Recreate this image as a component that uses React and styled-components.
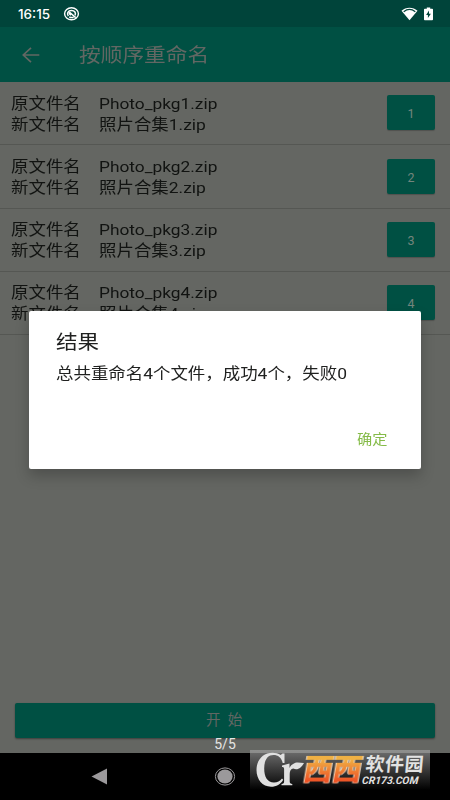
import React from "react";
import styled, { createGlobalStyle } from "styled-components";

const files = [1, 2, 3, 4];

const App = () => {
  return (
    <Screen>
      <GlobalStyle />
      <StatusBar>
        <Clock>16:15</Clock>
        <SyncIcon />
        <Spacer />
        <WifiIcon />
        <BatteryIcon />
      </StatusBar>
      <Header>
        <BackIcon />
        <Title>
          <Text size={19.3}>按顺序重命名</Text>
        </Title>
      </Header>

      <List>
        {files.map((n) => (
          <Row key={n}>
            <Labels>
              <Line><Text size={15.5}>原文件名</Text></Line>
              <Line><Text size={15.5}>新文件名</Text></Line>
            </Labels>
            <Names>
              <Line><Text size={15.4}>{`Photo_pkg${n}.zip`}</Text></Line>
              <Line><Text size={15.5}>{`照片合集${n}.zip`}</Text></Line>
            </Names>
            <Order>{n}</Order>
          </Row>
        ))}
      </List>

      <Footer>
        <Start>开 始</Start>
        <Count>5/5</Count>
      </Footer>

      <NavBar>
        <NavIcons />
      </NavBar>

      <Dialog>
        <DialogTitle><Text size={19.2}>结果</Text></DialogTitle>
        <Message><Text size={15.5}>总共重命名4个文件，成功4个，失败0</Text></Message>
        <Confirm><Text size={13.5}>确定</Text></Confirm>
      </Dialog>

      <Watermark>
        <Swirl />
        <Brand>西西</Brand>
        <Site>
          <SiteName>软件园</SiteName>
          <SiteUrl>CR173.COM</SiteUrl>
        </Site>
      </Watermark>
    </Screen>
  );
};

const SyncIcon = () => (
  <svg width="17" height="16" viewBox="0 0 17 16" fill="none">
    <ellipse cx="8.5" cy="7.7" rx="6.9" ry="6" stroke="#fff" strokeWidth="1.4" />
    <path d="M5.3 10.2C3.5 7.5 5 4.4 8.5 4.4c3.3 0 4.7 2.6 3.5 5" stroke="#fff" strokeWidth="1.5" />
    <path d="M6.3 6l6.4 5.6M6.3 10.8c1.2.8 3 .9 4.300.3M6.4 6.2v1.6l1.6 1.3" stroke="#fff" strokeWidth="1.5" />
  </svg>
);

const WifiIcon = () => (
  <svg width="17" height="14" viewBox="0 0 17 14">
    <path d="M.5 3.8C5-.4 12-.4 16.5 3.8L8.5 13.2z" fill="#fff" />
    <path d="M2.7 4.8C6.2 2 10.8 2 14.3 4.8" stroke="#00443a" strokeWidth="1.2" fill="none" />
  </svg>
);

const BatteryIcon = () => (
  <svg width="15" height="14" viewBox="-6 0 15 14">
    <path d="M2.8.4h3.4v1.3H8.2c.4 0 .8.3.8.7v10c0 .4-.4.8-.8.8H.8c-.5 0-.8-.4-.8-.8v-10c0-.4.3-.7.8-.7h2z" fill="#fff" />
    <path d="M5 3.5L2.1 8h1.8v3L6.9 6.7H5z" fill="#00443a" />
  </svg>
);

const BackIcon = () => (
  <svg width="18" height="16" viewBox="0 0 18 16" fill="none" stroke="#626763" strokeWidth="1.7">
    <path d="M17.3 8H1.5M9 .9L1.3 8 9 15.1" />
  </svg>
);

const NavIcons = () => (
  <svg width="450" height="47" viewBox="0 0 450 47">
    <path d="M91.5 23.4L107 15.5v16z" fill="#9b999b" />
    <ellipse cx="225" cy="23.5" rx="9.6" ry="8.6" fill="none" stroke="#9b999b" strokeWidth="1" />
    <ellipse cx="225" cy="23.5" rx="7.6" ry="6.9" fill="#9b999b" />
  </svg>
);

const Swirl = () => (
  <svg width="54" height="38" viewBox="0 0 54 38" fill="#e0e0e0">
    <path d="M34.500 3.500v9.500h-1.800C31.500 7.500 28 5 23.500 5c-6 0-9.300 5-9.300 13.500S17.500 32.500 24 32.500c3.300 0 6-1.500 8-4l1.200 1.200C30.500 34.500 26.500 36.700 21 36.700 12.500 36.700 6.500 29.500 6.500 20 6.500 10 13 2.700 22.500 2.700c3.200 0 5.700.8 8.200 2.300l1.800-1.500z" />
    <path d="M32 15.500l7.500-2v4.500c1-2.200 2.300-3.500 4-4.200C46 11.500 50 12.800 54 13c-2.500 4.500-6.200 7.700-10.700 5.600-2.500.4-3.600 2.600-3.600 5.400v7.500c0 1.600.8 2.200 2.600 2.500v1.200H31.500V34c2-.3 2.600-1 2.600-2.500V19c0-1.600-.6-2-2.100-2z" />
  </svg>
);

const GlobalStyle = createGlobalStyle`
  body {
    margin: 0;
    background: #000;
  }
  * {
    box-sizing: border-box;
  }
`;

const Screen = styled.div`
  position: relative;
  display: flex;
  flex-direction: column;
  width: 450px;
  height: 800px;
  overflow: hidden;
  background: #646662;
  color: #111311;
  font-family: Roboto, "Noto Sans CJK SC", sans-serif;
`;

// glyphs are a bit wider than tall on this screen
const Text = styled.span`
  display: inline-block;
  font-size: ${(props) => props.size}px;
  white-space: nowrap;
  transform: scaleX(1.125);
  transform-origin: left center;
`;

const StatusBar = styled.div`
  display: flex;
  align-items: center;
  height: 27px;
  padding: 0 17px 0 18px;
  background: #00443a;
`;

const Clock = styled.div`
  width: 45px;
  color: #fff;
  font: 500 13.5px/27px Inter, sans-serif;
  padding-top: 1px;
`;

const Spacer = styled.div`
  flex: 1;
`;

const Header = styled.div`
  display: flex;
  align-items: center;
  height: 55px;
  padding-left: 22px;
  background: #005043;
`;

const Title = styled.div`
  padding-top: 4px;
  margin-left: 39px;
  color: #626763;
  line-height: 54px;
`;

const List = styled.div`
  flex: 1;
`;

const Row = styled.div`
  display: flex;
  height: 63.3px;
  padding: 10.5px 15px 0 11px;
  border-bottom: 1px solid #555753;
`;

const Labels = styled.div`
  width: 87.5px;
`;

const Names = styled.div`
  flex: 1;
`;

const Line = styled.div`
  height: 21px;
  line-height: 21px;
`;

const Order = styled.div`
  width: 48px;
  height: 35px;
  margin-top: 2.8px;
  border-radius: 2px;
  background: #005043;
  box-shadow: 0 1px 1px rgba(0, 0, 0, 0.2);
  color: #74857d;
  font-size: 12.5px;
  line-height: 37px;
  text-align: center;
`;

const Footer = styled.div`
  height: 50px;
  padding: 0 15px;
`;

const Start = styled.div`
  height: 35px;
  border-radius: 2px;
  background: #005043;
  box-shadow: 0 1px 2px rgba(0, 0, 0, 0.4);
  color: #626763;
  font-size: 14.5px;
  line-height: 36px;
  letter-spacing: 1.8px;
  text-align: center;
`;

const Count = styled.div`
  color: #e4e5e4;
  font-size: 14px;
  line-height: 12px;
  text-align: center;
`;

const NavBar = styled.div`
  height: 47px;
  background: #000;
`;

const Dialog = styled.div`
  position: absolute;
  left: 29px;
  top: 311px;
  width: 392px;
  height: 158px;
  padding: 18px 26.5px;
  border-radius: 2px;
  background: #fff;
  box-shadow: 0 7px 14px rgba(0, 0, 0, 0.22);
  color: #202120;
`;

const DialogTitle = styled.div`
  height: 28px;
  line-height: 28px;
`;

const Message = styled.div`
  height: 34px;
  line-height: 34px;
`;

const Confirm = styled.div`
  height: 30px;
  margin: 33px 0 0 301.5px;
  color: #85bb48;
  line-height: 30px;
`;

const Watermark = styled.div`
  position: absolute;
  left: 250px;
  top: 750px;
  display: flex;
  width: 180px;
  height: 40px;
  background: linear-gradient(rgba(160, 160, 160, 0.7), rgba(0, 0, 0, 0));
`;

const Brand = styled.div`
  width: 58px;
  height: 38px;
  background: linear-gradient(#efb044 25%, #ed5426 80%);
  background-clip: text;
  color: transparent;
  font-size: 29px;
  font-weight: 900;
  line-height: 40px;
  white-space: nowrap;
  transform: skewX(-10deg);
  filter: drop-shadow(1px 0 0 #f3dfc9) drop-shadow(-1px 0 0 #f3dfc9);
`;

const Site = styled.div`
  padding: 5px 0 0 1px;
  color: #e2e2e2;
  transform: skewX(-5deg);
  white-space: nowrap;
`;

const SiteName = styled.div`
  height: 20px;
  font-size: 19px;
  font-weight: 700;
  line-height: 20px;
  letter-spacing: 0.5px;
  padding-left: 2px;
`;

const SiteUrl = styled.div`
  font-size: 10.5px;
  font-weight: 700;
  font-style: italic;
  line-height: 12px;
`;

export default App;
